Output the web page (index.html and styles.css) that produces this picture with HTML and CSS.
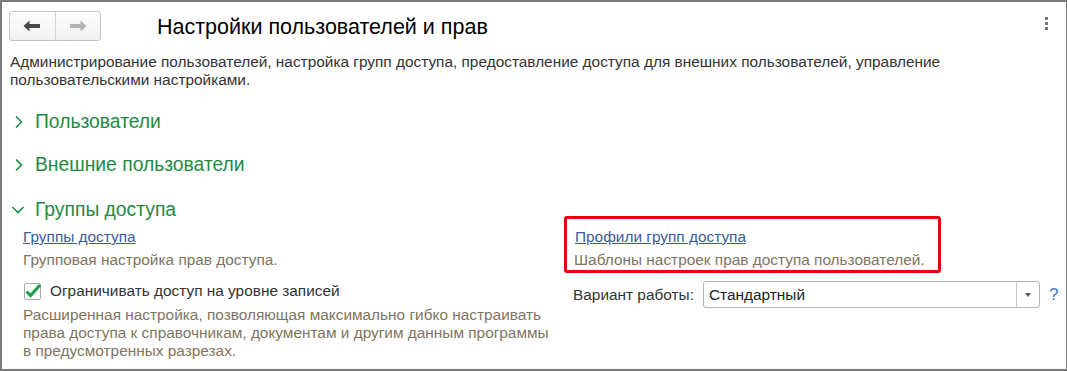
FILE: index.html
```html
<!DOCTYPE html>
<html lang="ru">
<head>
<meta charset="utf-8">
<link rel="stylesheet" href="styles.css">
</head>
<body>
<div class="window">
  <div class="header">
    <div class="nav">
      <div class="nav-btn">
        <svg width="18" height="12" viewBox="0 0 18 12"><path d="M0.5 6 L6.5 0.5 L6.5 4 L17 4 L17 8 L6.5 8 L6.5 11.5 Z" fill="#4a4a4a"/></svg>
      </div>
      <div class="nav-btn">
        <svg width="18" height="12" viewBox="0 0 18 12"><path d="M17.5 6 L11.5 0.5 L11.5 4 L1 4 L1 8 L11.5 8 L11.5 11.5 Z" fill="#b3b3b3"/></svg>
      </div>
    </div>
    <h1 class="title">Настройки пользователей и прав</h1>
    <div class="more"><span></span><span></span><span></span></div>
  </div>
  <p class="intro">Администрирование пользователей, настройка групп доступа, предоставление доступа для внешних пользователей, управление пользовательскими настройками.</p>

  <div class="section collapsed">
    <svg class="chev" width="10" height="14" viewBox="0 0 10 14"><path d="M2 1.5 L7.5 7 L2 12.5" fill="none" stroke="#1e8a46" stroke-width="1.6"/></svg>
    <span>Пользователи</span>
  </div>
  <div class="section collapsed">
    <svg class="chev" width="10" height="14" viewBox="0 0 10 14"><path d="M2 1.5 L7.5 7 L2 12.5" fill="none" stroke="#1e8a46" stroke-width="1.6"/></svg>
    <span>Внешние пользователи</span>
  </div>
  <div class="section expanded">
    <svg class="chev" width="14" height="14" viewBox="0 0 14 14"><path d="M1.5 4 L7 9.5 L12.5 4" fill="none" stroke="#1e8a46" stroke-width="1.6"/></svg>
    <span>Группы доступа</span>
  </div>

  <div class="group-body">
    <div class="col-left">
      <a class="link" href="#">Группы доступа</a>
      <div class="hint">Групповая настройка прав доступа.</div>
      <label class="check-row">
        <span class="checkbox">
          <svg width="18" height="16" viewBox="0 0 18 16"><path d="M2.5 8.5 L6.5 12.5 L16 2" fill="none" stroke="#1c9c44" stroke-width="3"/></svg>
        </span>
        <span class="check-label">Ограничивать доступ на уровне записей</span>
      </label>
      <div class="hint multi">Расширенная настройка, позволяющая максимально гибко настраивать права доступа к справочникам, документам и другим данным программы в предусмотренных разрезах.</div>
    </div>
    <div class="col-right">
      <div class="highlight">
        <a class="link" href="#">Профили групп доступа</a>
        <div class="hint">Шаблоны настроек прав доступа пользователей.</div>
      </div>
      <div class="field-row">
        <span class="field-label">Вариант работы:</span>
        <div class="select">
          <span class="select-value">Стандартный</span>
          <span class="select-btn"><i></i></span>
        </div>
        <span class="help">?</span>
      </div>
    </div>
  </div>
</div>
</body>
</html>
```

FILE: styles.css
```css
* { box-sizing: border-box; }
html, body { margin: 0; padding: 0; background: #fff; }
body {
  font-family: "Liberation Sans", Arial, sans-serif;
  color: #333;
}
.window {
  width: 1067px;
  height: 371px;
  border-top: 2px solid #7a7a7a;
  border-left: 2px solid #7a7a7a;
  border-bottom: 2px solid #7a7a7a;
  border-right: 1px solid #7a7a7a;
  overflow: hidden;
}
.header {
  display: flex;
  align-items: center;
  padding: 9px 0 0 7px;
  height: 39px;
}
.nav {
  display: flex;
  width: 92px;
  height: 30px;
  border: 1px solid #c4c4c4;
  border-radius: 3px;
  background: linear-gradient(#ffffff, #f1f1f1);
}
.nav-btn {
  flex: 1;
  display: flex;
  align-items: center;
  justify-content: center;
}
.nav-btn + .nav-btn { border-left: 1px solid #d6d6d6; }
.title {
  margin: 0 0 0 56px;
  font-weight: normal;
  font-size: 21.5px;
  color: #000;
  flex: 1;
  position: relative;
  top: 1px;
}
.more {
  display: flex;
  flex-direction: column;
  gap: 2px;
  margin-right: 18px;
  position: relative;
  top: -3px;
}
.more span {
  width: 3px;
  height: 3px;
  background: #777;
}
.intro {
  margin: 12px 0 0 8px;
  font-size: 15.4px;
  line-height: 18px;
  color: #333;
  width: 960px;
}
.section {
  display: flex;
  align-items: center;
  height: 24px;
  margin: 21px 0 0 12px;
  color: #1e8a46;
  font-size: 19.3px;
}
.section + .section { margin-top: 19px; }
.section.expanded { margin-top: 21px; margin-left: 9px; }
.section .chev { margin-right: 11px; }
.section.expanded .chev { margin-right: 10px; }
.group-body {
  display: grid;
  grid-template-columns: 541px 1fr;
  padding-left: 21px;
  margin-top: -6px;
}
.col-left { padding-top: 12px; display: flex; flex-direction: column; align-items: flex-start; }
.link {
  font-size: 15.4px;
  line-height: 18px;
  color: #3b5c9c;
  text-decoration: underline;
}
.hint {
  font-size: 15.4px;
  line-height: 18px;
  color: #7f7562;
  margin-top: 5px;
}
.check-row {
  display: flex;
  align-items: center;
  height: 20px;
  margin-top: 12px;
}
.checkbox {
  width: 17px;
  height: 17px;
  border: 1px solid #a8a8a8;
  border-radius: 2px;
  display: flex;
  align-items: center;
  justify-content: center;
  margin: 0 9px 0 1px;
  background: #fff;
  overflow: visible;
}
.checkbox svg { flex: none; }
.check-label { font-size: 15.4px; color: #333; }
.hint.multi { width: 538px; }
.col-right { display: flex; flex-direction: column; align-items: flex-start; }
.highlight {
  width: 377px;
  border: 3px solid #e3000f;
  border-radius: 3px;
  padding: 9px 7px 1px 7px;
  display: flex;
  flex-direction: column;
  align-items: flex-start;
}
.highlight .link { margin-left: 1px; }
.field-row {
  display: flex;
  align-items: center;
  margin: 8px 0 0 9px;
}
.field-label { font-size: 15.4px; color: #333; width: 130px; }
.select {
  display: flex;
  width: 337px;
  height: 27px;
  border: 1px solid #b4b4b4;
  border-radius: 3px;
}
.select-value {
  flex: 1;
  font-size: 15.4px;
  color: #222;
  padding-left: 5px;
  line-height: 25px;
}
.select-btn {
  width: 23px;
  border-left: 1px solid #c8c8c8;
  display: flex;
  align-items: center;
  justify-content: center;
}
.select-btn i {
  width: 0;
  height: 0;
  border-left: 3px solid transparent;
  border-right: 3px solid transparent;
  border-top: 4px solid #555;
}
.help {
  margin-left: 9px;
  font-size: 17px;
  color: #3a7bc6;
}
```
